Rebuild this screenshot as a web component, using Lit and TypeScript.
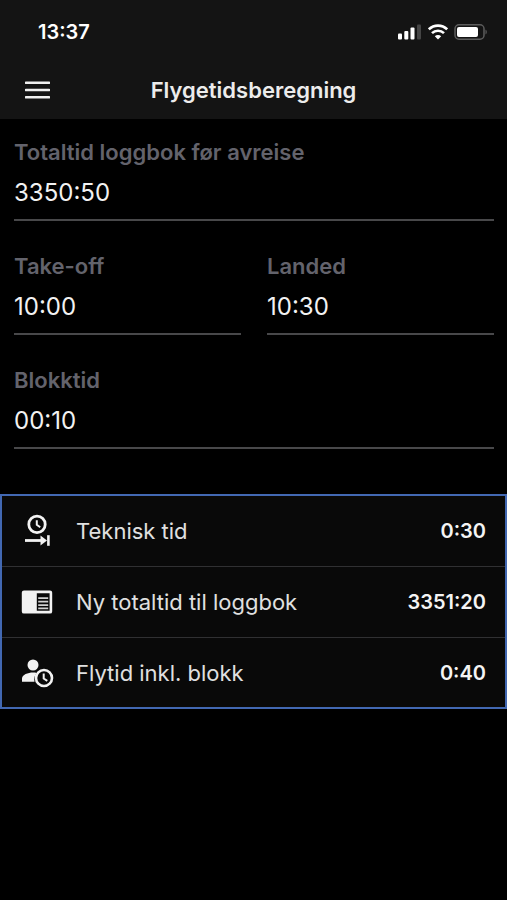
import { LitElement, html, css, svg, type TemplateResult } from "lit";
import { customElement, property } from "lit/decorators.js";

const clockIcon = svg`
  <circle cx="17" cy="10.400" r="8.2" fill="none" stroke="currentColor" stroke-width="2.8"/>
  <path d="M16.8 6.2v4.6l3.4 2.4" fill="none" stroke="currentColor" stroke-width="2"/>
  <path d="M5 26.5h17" stroke="currentColor" stroke-width="2.8"/>
  <path d="M20.500 21.400l6.500 5.100-6.500 5.100z" fill="currentColor"/>
  <path d="M28.400 21.200v10.600" stroke="currentColor" stroke-width="2.600"/>`;

const bookIcon = svg`
  <path fill="currentColor" fill-rule="evenodd" d="M4 5.400h26a2.200 2.200 0 0 1 2.200 2.200v18.800a2.200 2.200 0 0 1-2.200 2.200H4a2.200 2.200 0 0 1-2.200-2.200V7.600A2.200 2.200 0 0 1 4 5.400zM16.800 8.200v17.600h12.800V8.200z"/>
  <path d="M18.200 13.100h10M18.200 16.600h10M18.200 20.100h10M18.200 23.400h10" stroke="#d0d0d0" stroke-width="1.600"/>`;

const personIcon = svg`
  <circle cx="13" cy="9" r="5.500" fill="currentColor"/>
  <path fill="currentColor" d="M2 25.800v-3.200c0-3.800 6-6.100 11-6.100 1.300 0 2.600.1 3.800.4a9.600 9.600 0 0 0-2.300 8.900z"/>
  <circle cx="24" cy="22" r="8" fill="none" stroke="currentColor" stroke-width="2.600"/>
  <path d="M23.700 17.500v5l3.600 2.300" fill="none" stroke="currentColor" stroke-width="2"/>`;

interface Result {
  icon: TemplateResult<2>;
  label: string;
  value: string;
}

const results: Result[] = [
  { icon: clockIcon, label: "Teknisk tid", value: "0:30" },
  { icon: bookIcon, label: "Ny totaltid til loggbok", value: "3351:20" },
  { icon: personIcon, label: "Flytid inkl. blokk", value: "0:40" },
];

@customElement("time-field")
export class TimeField extends LitElement {
  @property() label = "";
  @property() value = "";

  static styles = css`
    :host {
      display: block;
      min-width: 0;
    }
    .label {
      display: block;
      color: #63636c;
      font-size: 22px;
      font-weight: 600;
      line-height: 28px;
      white-space: nowrap;
    }
    .input {
      display: block;
      box-sizing: border-box;
      width: 100%;
      height: 55px;
      margin: 0;
      padding: 0;
      border: 0;
      border-bottom: 2px solid #48484a;
      border-radius: 0;
      outline: none;
      background: transparent;
      color: #f2f2f2;
      font: inherit;
      font-size: 24px;
    }
  `;

  render() {
    return html`
      <label class="label" for="input">${this.label}</label>
      <input class="input" id="input" type="text" .value=${this.value} />
    `;
  }
}

@customElement("app-root")
export class AppRoot extends LitElement {
  static styles = css`
    :host {
      display: block;
      min-height: 100vh;
      background: #000;
      color: #f2f2f2;
      font-family: Inter, "Liberation Sans", sans-serif;
    }
    .top {
      background: #141414;
    }
    .status {
      display: flex;
      align-items: center;
      justify-content: space-between;
      height: 60px;
      box-sizing: border-box;
      padding: 3px 19px 0 38px;
      color: #fff;
      font-size: 20px;
      font-weight: 600;
    }
    .signals {
      display: flex;
      align-items: center;
      gap: 6px;
    }
    .signals svg {
      display: block;
    }
    .bar {
      display: grid;
      grid-template-columns: 50px 1fr 50px;
      align-items: center;
      height: 59px;
      padding: 0 12px;
    }
    .menu {
      display: flex;
      align-items: center;
      justify-content: center;
      width: 50px;
      height: 44px;
      padding: 0;
      border: 0;
      background: none;
      color: #f0f0f0;
    }
    .title {
      margin: 0;
      color: #ececec;
      font-size: 22px;
      font-weight: 600;
      line-height: 30px;
      text-align: center;
    }
    .form {
      display: grid;
      grid-template-columns: 1fr 1fr;
      gap: 31px 26px;
      padding: 19px 13px 45px 14px;
    }
    .wide {
      grid-column: 1 / -1;
    }
    .results {
      margin: 0;
      border: 2px solid #4268b2;
      background: #090909;
    }
    .row {
      display: flex;
      align-items: center;
      box-sizing: border-box;
      height: 71px;
      padding: 0 19px 0 18px;
      border-bottom: 1px solid #303032;
    }
    .row:last-child {
      height: 69px;
      border-bottom: 0;
    }
    .icon {
      flex: none;
      margin-right: 22px;
    }
    .name {
      flex: 1;
      color: #e0e0e0;
      font-size: 22px;
    }
    .value {
      margin: 0;
      color: #f4f4f4;
      font-size: 20px;
      font-weight: 600;
    }
  `;

  render() {
    return html`
      <header class="top">
        <div class="status">
          <span>13:37</span>
          <div class="signals">
            <svg width="24" height="16" viewBox="0 0 24 16" aria-hidden="true">
              <rect x="0" y="9.500" width="4" height="6" rx="1" fill="#fff"/>
              <rect x="6.300" y="7" width="4" height="8.500" rx="1" fill="#fff"/>
              <rect x="12.500" y="3.500" width="4" height="12" rx="1" fill="#fff"/>
              <rect x="19" y="0.500" width="4" height="15" rx="1" fill="#454545"/>
            </svg>
            <svg width="20" height="16" viewBox="0 0 20 16" aria-hidden="true">
              <g fill="none" stroke="#fff" stroke-width="2.600">
                <path d="M0.800 5.400a13 13 0 0 1 18.400 0"/>
                <path d="M4 9.200a8.500 8.500 0 0 1 12 0"/>
              </g>
              <path d="M10 15.600l-3.200-3.400a4.600 4.600 0 0 1 6.400 0z" fill="#fff"/>
            </svg>
            <svg width="34" height="16" viewBox="0 0 34 16" aria-hidden="true">
              <rect x="1" y="0.800" width="29" height="14.400" rx="4" fill="none" stroke="#5c5c5c" stroke-width="1.500"/>
              <rect x="3" y="3" width="21" height="10" rx="2" fill="#fff"/>
              <path d="M31.500 5.500a3 3 0 0 1 0 5z" fill="#5c5c5c"/>
            </svg>
          </div>
        </div>
        <div class="bar">
          <button class="menu" type="button" aria-label="Meny">
            <svg width="25" height="18" viewBox="0 0 25 18" aria-hidden="true">
              <path d="M1 1.800h23M1 9h23M1 16.200h23" stroke="currentColor" stroke-width="2.600" stroke-linecap="round"/>
            </svg>
          </button>
          <h1 class="title">Flygetidsberegning</h1>
        </div>
      </header>
      <main>
        <form class="form">
          <time-field class="wide" label="Totaltid loggbok før avreise" value="3350:50"></time-field>
          <time-field label="Take-off" value="10:00"></time-field>
          <time-field label="Landed" value="10:30"></time-field>
          <time-field class="wide" label="Blokktid" value="00:10"></time-field>
        </form>
        <dl class="results">
          ${results.map(
            (r) => html`
              <div class="row">
                <svg class="icon" width="34" height="34" viewBox="0 0 34 34" aria-hidden="true">${r.icon}</svg>
                <dt class="name">${r.label}</dt>
                <dd class="value">${r.value}</dd>
              </div>
            `
          )}
        </dl>
      </main>
    `;
  }
}
